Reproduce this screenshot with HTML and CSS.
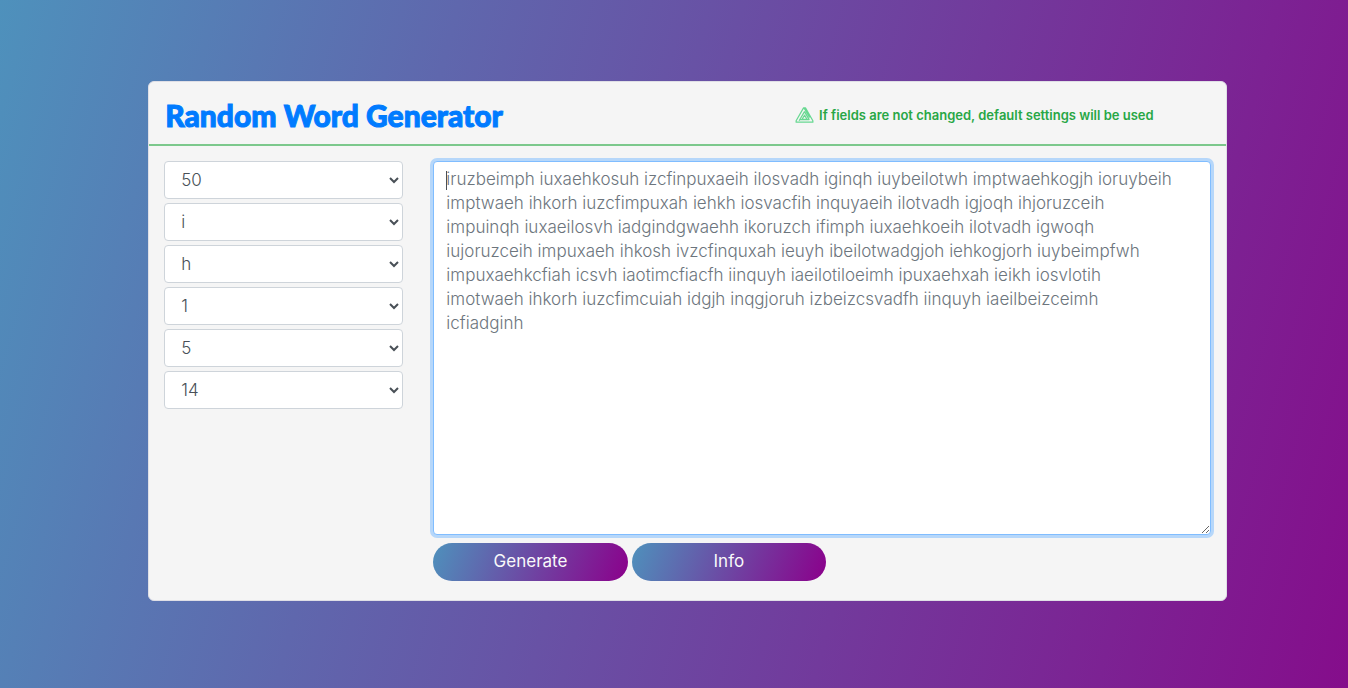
FILE: index.html
```html
<!DOCTYPE html>
<html lang="en">
<head>
<meta charset="utf-8">
<meta name="viewport" content="width=device-width, initial-scale=1">
<title>Random Word Generator</title>
<link rel="stylesheet" href="styles.css">
</head>
<body>
<main class="card">
  <header class="card-header">
    <h1 class="title">Random Word Generator</h1>
    <p class="notice">
      <svg class="notice-icon" viewBox="0 0 20 18" aria-hidden="true"><path d="M9 1.5h2L18.8 15v1.6H1.2V15ZM10 5.4 4.3 15M10 5.4 14.8 13.6H7.4L10 9.2 12.3 13M9.8 2 15.4 11.6M5 13.9H15"/></svg>
      <span class="notice-text">If fields are not changed, default settings will be used</span>
    </p>
  </header>
  <form class="content">
    <div class="settings">
      <select class="field" aria-label="Number of words"><option>50</option></select>
      <select class="field" aria-label="First letter"><option>i</option></select>
      <select class="field" aria-label="Last letter"><option>h</option></select>
      <select class="field" aria-label="Step"><option>1</option></select>
      <select class="field" aria-label="Minimum length"><option>5</option></select>
      <select class="field" aria-label="Maximum length"><option>14</option></select>
    </div>
    <div class="output">
      <div class="editor">
        <textarea class="words" aria-label="Generated words" spellcheck="false">iruzbeimph iuxaehkosuh izcfinpuxaeih ilosvadh iginqh iuybeilotwh imptwaehkogjh ioruybeih
imptwaeh ihkorh iuzcfimpuxah iehkh iosvacfih inquyaeih ilotvadh igjoqh ihjoruzceih
impuinqh iuxaeilosvh iadgindgwaehh ikoruzch ifimph iuxaehkoeih ilotvadh igwoqh
iujoruzceih impuxaeh ihkosh ivzcfinquxah ieuyh ibeilotwadgjoh iehkogjorh iuybeimpfwh
impuxaehkcfiah icsvh iaotimcfiacfh iinquyh iaeilotiloeimh ipuxaehxah ieikh iosvlotih
imotwaeh ihkorh iuzcfimcuiah idgjh inqgjoruh izbeizcsvadfh iinquyh iaeilbeizceimh
icfiadginh</textarea>
        <span class="caret"></span>
      </div>
      <div class="actions">
        <button class="action" type="button">Generate</button>
        <button class="action" type="button">Info</button>
      </div>
    </div>
  </form>
</main>
</body>
</html>
```
FILE: styles.css
```css
* { box-sizing: border-box; }
body {
  margin: 0;
  min-height: 100vh;
  padding: 81px 9% 86px 11%;
  background: linear-gradient(105deg, #4e91bc, #5f67ad 30%, #850d8b) no-repeat;
  font-family: Inter, "Noto Sans", sans-serif;
  font-size: 16px;
  line-height: 24px;
}
.card {
  background: #f5f5f5;
  border: 1px solid #dfdfe6;
  border-radius: 6px;
}
.card-header {
  display: grid;
  grid-template-columns: 60% 1fr;
  align-items: center;
  height: 64px;
  padding-top: 4px;
  border-bottom: 2px solid #7cc88c;
}
.title {
  margin: 0;
  padding-left: 16px;
  color: #007bff;
  font: 900 30px/40px Lato, sans-serif;
  -webkit-text-stroke: 1px #007bff;
}
.notice {
  display: flex;
  align-items: center;
  gap: 5px;
  margin: 0;
  color: #28a745;
  font-size: 13px;
  font-weight: 600;
}
.notice-icon {
  width: 19px;
  height: 18px;
  fill: none;
  stroke: #67d891;
  stroke-width: 1.3;
  stroke-linejoin: round;
}
.content {
  display: grid;
  grid-template-columns: 1fr 3fr;
  padding: 15px 0 19px;
}
.settings, .output { padding: 0 15px; }
.settings {
  display: flex;
  flex-direction: column;
  gap: 4px;
}
.field {
  width: 100%;
  height: 38px;
  padding: 6px 0 6px 12px;
  border: 1px solid #ced4da;
  border-radius: 4px;
  background: #fff;
  color: #495057;
  font: 300 17px/24px Inter, sans-serif;
}
.editor { position: relative; }
.words {
  display: block;
  width: 100%;
  height: 374px;
  padding: 5px 12px;
  border: 1px solid #80bdff;
  border-radius: 4px;
  outline: 0;
  box-shadow: 0 0 0 3px #b6d7fa;
  color: #6c757d;
  font: 300 17px/24px Inter, sans-serif;
  resize: both;
}
.caret {
  position: absolute;
  top: 10px;
  left: 13px;
  width: 1px;
  height: 19px;
  background: #495057;
  pointer-events: none;
}
.actions {
  display: flex;
  gap: 4px;
  margin-top: 8px;
}
.action {
  width: 25%;
  height: 38px;
  padding: 0 12px 2px;
  border: 0;
  border-radius: 19px;
  background: linear-gradient(110deg, #4e91bc, #8b008b);
  color: #f8f9fa;
  font: 400 17px/24px Inter, sans-serif;
}
```
